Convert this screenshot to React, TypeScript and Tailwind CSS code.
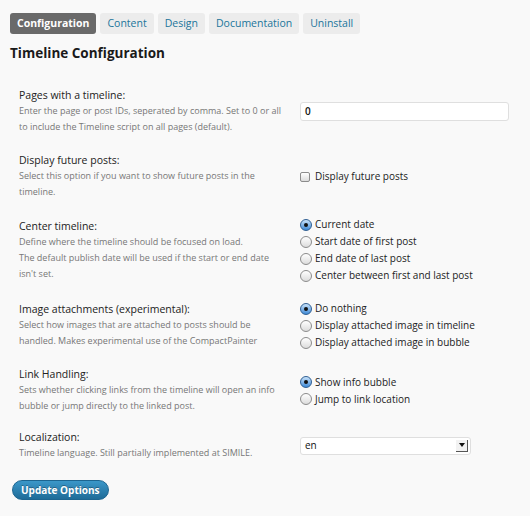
import { ReactNode } from 'react';

const tabs = ['Configuration', 'Content', 'Design', 'Documentation', 'Uninstall'];

function Radio({ checked, label }: { checked?: boolean; label: string }) {
  return (
    <label className="flex items-center gap-[3px] h-[17px] text-[10px] text-[#222] whitespace-nowrap">
      {checked ? (
        <span className="w-[12px] h-[12px] rounded-full border border-[#2f5f93] bg-gradient-to-b from-[#c9e3fa] to-[#3d8ad6] flex items-center justify-center">
          <span className="w-[4px] h-[4px] rounded-full bg-[#111]" />
        </span>
      ) : (
        <span className="w-[12px] h-[12px] rounded-full border border-[#8c8c8c] bg-gradient-to-b from-[#ffffff] to-[#dcdcdc]" />
      )}
      {label}
    </label>
  );
}

function Row({ label, desc, children }: { label: string; desc: string[]; children: ReactNode }) {
  return (
    <div className="flex items-center py-[8px]">
      <div className="w-[281px] shrink-0">
        <div className="text-[10.5px] leading-[15px] text-[#222]">{label}</div>
        <div className="text-[9px] leading-[16px] text-[#777] whitespace-nowrap">
          {desc.map((line, i) => (
            <div key={i}>{line}</div>
          ))}
        </div>
      </div>
      <div className="flex-1">{children}</div>
    </div>
  );
}

export default function App() {
  return (
    <div
      className="min-h-[516px] bg-[#f9f9f9] px-[10px] pt-[13px]"
      style={{ fontFamily: '"Open Sans", "Liberation Sans", sans-serif' }}
    >
      {/* Tabs */}
      <div className="flex gap-[4px]">
        {tabs.map((tab, i) => (
          <div
            key={tab}
            className={
              i === 0
                ? 'h-[21px] px-[7px] flex items-center rounded-[3px] bg-[#6a6a6a] text-white font-bold text-[10.5px]'
                : 'h-[21px] px-[7px] flex items-center rounded-[3px] bg-[#ececec] text-[#21759b] text-[10.5px]'
            }
          >
            {tab}
          </div>
        ))}
      </div>

      <h3 className="mt-[10px] text-[13.5px] leading-[18px] font-bold text-[#1a1a1a]">Timeline Configuration</h3>

      <div className="mt-[18px] pl-[9px]">
        <Row
          label="Pages with a timeline:"
          desc={[
            'Enter the page or post IDs, seperated by comma. Set to 0 or all',
            'to include the Timeline script on all pages (default).',
          ]}
        >
          <div className="w-[209px] h-[19px] bg-white border border-[#dfdfdf] rounded-[3px] flex items-center px-[4px] text-[10px] text-[#111] font-semibold">
            0
          </div>
        </Row>

        <div className="h-[2px]" />

        <Row
          label="Display future posts:"
          desc={['Select this option if you want to show future posts in the', 'timeline.']}
        >
          <label className="flex items-center gap-[5px] text-[10px] text-[#222]">
            <span className="w-[10px] h-[10px] rounded-[2px] border border-[#8c8c8c] bg-gradient-to-b from-white to-[#dcdcdc]" />
            Display future posts
          </label>
        </Row>

        <Row
          label="Center timeline:"
          desc={[
            'Define where the timeline should be focused on load.',
            'The default publish date will be used if the start or end date',
            "isn't set.",
          ]}
        >
          <Radio checked label="Current date" />
          <Radio label="Start date of first post" />
          <Radio label="End date of last post" />
          <Radio label="Center between first and last post" />
        </Row>

        <Row
          label="Image attachments (experimental):"
          desc={[
            'Select how images that are attached to posts should be',
            'handled. Makes experimental use of the CompactPainter',
          ]}
        >
          <Radio checked label="Do nothing" />
          <Radio label="Display attached image in timeline" />
          <Radio label="Display attached image in bubble" />
        </Row>

        <Row
          label="Link Handling:"
          desc={[
            'Sets whether clicking links from the timeline will open an info',
            'bubble or jump directly to the linked post.',
          ]}
        >
          <Radio checked label="Show info bubble" />
          <Radio label="Jump to link location" />
        </Row>

        <Row label="Localization:" desc={['Timeline language. Still partially implemented at SIMILE.']}>
          <div className="w-[171px] h-[18px] bg-white border border-[#dfdfdf] rounded-[3px] flex items-center justify-between pl-[4px] pr-[2px] text-[10px] text-[#111]">
            <span>en</span>
            <span className="w-[12px] h-[12px] border-r border-b border-[#555] bg-[#f2f2f2] flex items-center justify-center">
              <svg width="6" height="4" viewBox="0 0 6 4">
                <path d="M0 0h6L3 4z" fill="#111" />
              </svg>
            </span>
          </div>
        </Row>
      </div>

      <button className="mt-[11px] ml-[2px] h-[20px] px-[8px] rounded-full border border-[#1d6590] bg-gradient-to-b from-[#3b97c9] to-[#1f6c98] text-white font-bold text-[10px] [text-shadow:0_-1px_0_rgba(0,0,0,0.3)]">
        Update Options
      </button>
    </div>
  );
}
